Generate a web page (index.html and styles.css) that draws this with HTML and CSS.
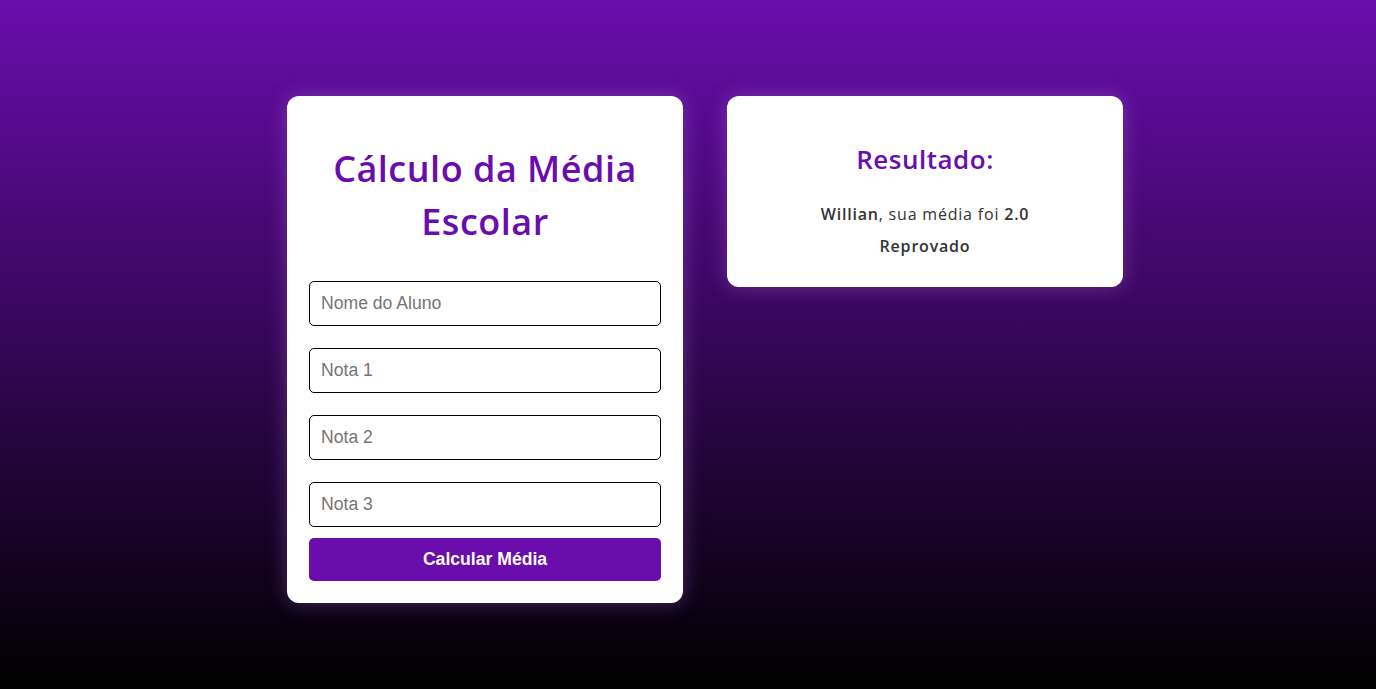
FILE: index.html
```html
<!DOCTYPE html>
<html lang="pt-BR">
<head>
<meta charset="UTF-8">
<title>Cálculo da Média Escolar</title>
<link rel="stylesheet" href="styles.css">
</head>
<body>
<main class="wrap">
  <section class="card form-card">
    <h1 class="title">Cálculo da Média Escolar</h1>
    <form class="form">
      <input class="field" type="text" placeholder="Nome do Aluno">
      <input class="field" type="text" placeholder="Nota 1">
      <input class="field" type="text" placeholder="Nota 2">
      <input class="field" type="text" placeholder="Nota 3">
      <button class="btn" type="button">Calcular Média</button>
    </form>
  </section>
  <section class="card result-card">
    <h2 class="result-title">Resultado:</h2>
    <p class="result-line"><strong>Willian</strong>, sua média foi <strong>2.0</strong></p>
    <p class="result-line"><strong>Reprovado</strong></p>
  </section>
</main>
</body>
</html>
```
FILE: styles.css
```css
* { box-sizing: border-box; }
html, body { margin: 0; height: 100%; }
body {
  background: linear-gradient(to bottom, #6a0dad 0%, #000000 100%);
  font-family: "Open Sans", "Noto Sans", sans-serif;
  min-height: 689px;
}
.wrap {
  display: flex;
  justify-content: center;
  align-items: flex-start;
  gap: 44px;
  padding: 96px 0 0 34px;
}
.card {
  width: 396px;
  background: #fff;
  border-radius: 12px;
  padding: 22px;
  box-shadow: 0 0 20px rgba(180, 130, 230, 0.35);
}
.title {
  margin: 24px 0 33px;
  font-size: 36px;
  line-height: 53px;
  font-weight: 600;
  letter-spacing: 0.5px;
  color: #6a0dad;
  text-align: center;
}
.form { display: flex; flex-direction: column; }
.field {
  height: 45px;
  margin-bottom: 22px;
  border: 1px solid #000;
  border-radius: 5px;
  padding: 0 11px;
  font-family: "Liberation Sans", Arial, sans-serif;
  font-size: 17.6px;
  color: #333;
}
.field:last-of-type { margin-bottom: 11px; }
.field::placeholder { color: #757575; }
.btn {
  height: 43px;
  border: 0;
  border-radius: 5px;
  background: #6a0dad;
  color: #fff;
  font-family: "Liberation Sans", Arial, sans-serif;
  font-size: 17.6px;
  font-weight: 700;
}
.result-title {
  margin: 22px 0 19px;
  font-size: 26px;
  line-height: 39px;
  font-weight: 600;
  letter-spacing: 0.5px;
  color: #6a0dad;
  text-align: center;
}
.result-line {
  margin: 0;
  font-size: 16px;
  line-height: 32px;
  font-weight: 400;
  letter-spacing: 0.8px;
  color: #333;
  text-align: center;
}
.result-line:last-child { margin-bottom: 3px; }
.result-line strong { font-weight: 600; }
```
